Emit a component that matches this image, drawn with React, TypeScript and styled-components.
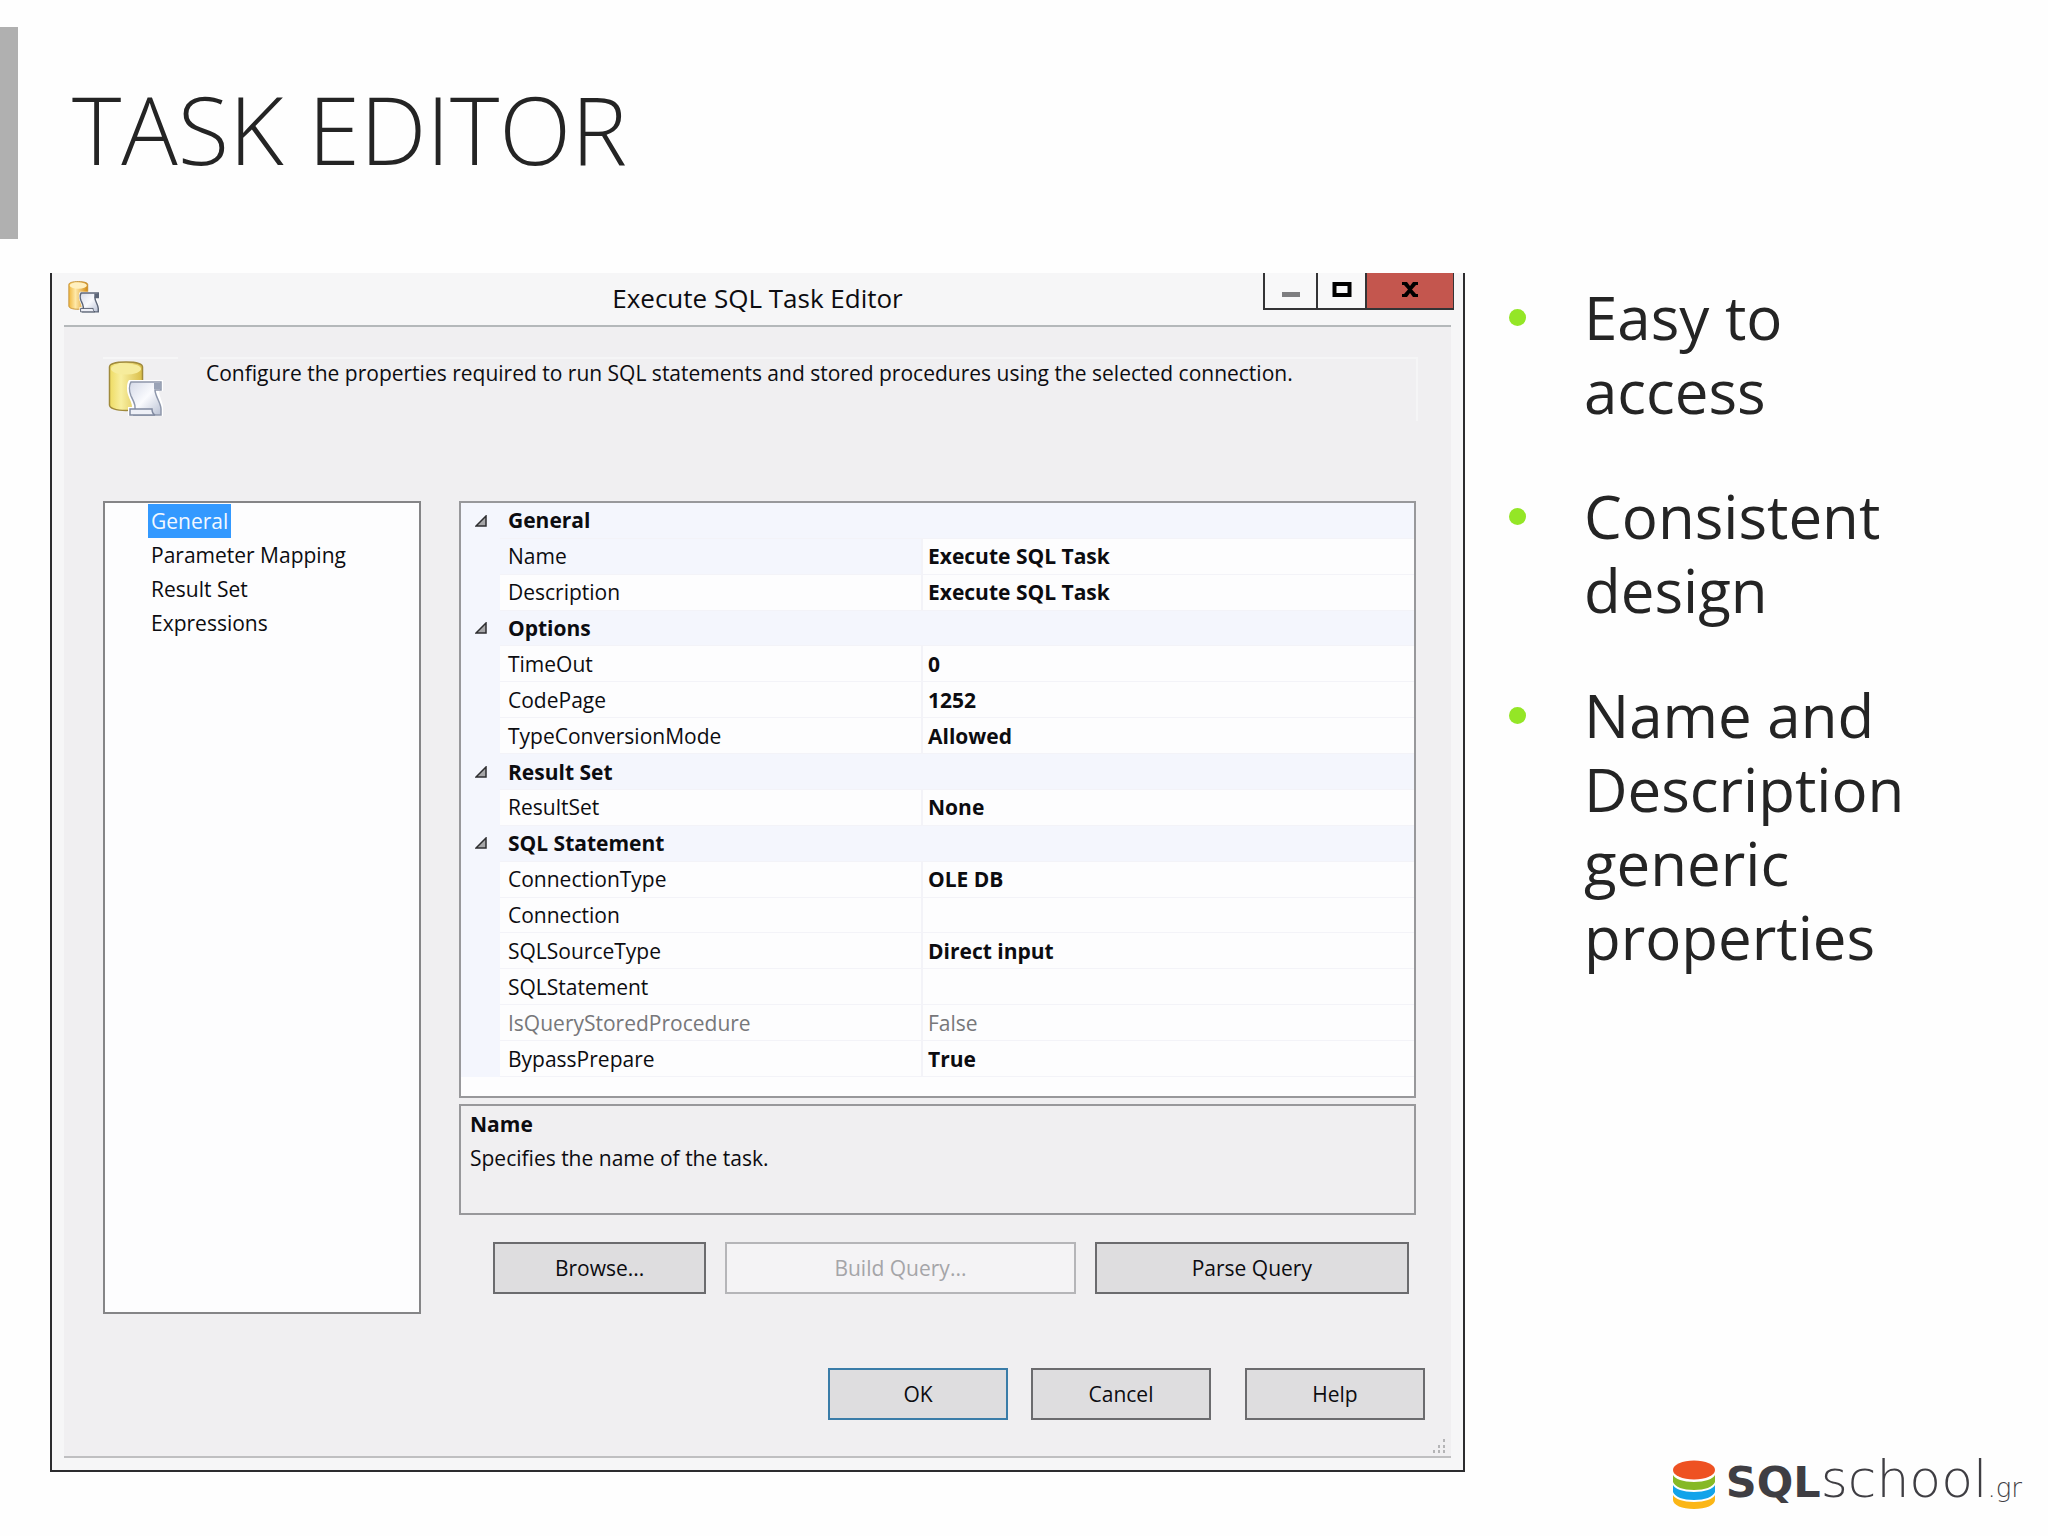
import React from "react";
import styled, { createGlobalStyle, css } from "styled-components";

const GlobalStyle = createGlobalStyle`
  *, *::before, *::after { box-sizing: border-box; }
  body { margin: 0; background: #fefefe; }
  body, button { font-family: "Open Sans", "Noto Sans", sans-serif; }
`;

const Slide = styled.main`
  display: flex;
  flex-direction: column;
  min-height: 100vh;
  padding-top: 27px;
  color: #242424;
`;

const Heading = styled.header`
  display: flex;
  align-items: flex-start;
  height: 212px;
  margin-bottom: 34px;
  padding: 34px 0 0 54px;
  border-left: 18px solid #b0b0b0;
`;

const Title = styled.h1`
  margin: 0;
  font-size: 94px;
  font-weight: 300;
  line-height: 136px;
`;

const Content = styled.div`
  display: flex;
  flex: 1;
  padding-left: 50px;
`;

const Dialog = styled.section`
  flex: 1;
  align-self: flex-start;
  min-width: 0;
  padding: 0 12px 12px;
  border: 2px solid #2c2c2e;
  border-top: 0;
  background: #f6f6f7;
  color: #0c0c10;
  font-size: 21px;
  line-height: 34px;
`;

const TitleBar = styled.div`
  position: relative;
  display: flex;
  align-items: flex-start;
  justify-content: center;
  height: 52px;
  padding-top: 8px;
`;

const TitleIcon = styled.div`
  position: absolute;
  left: 4px;
  top: 8px;
  display: flex;
`;

const DialogTitle = styled.h2`
  margin: 0;
  font-size: 26px;
  font-weight: 400;
  line-height: 34px;
`;

const WindowControls = styled.div`
  position: absolute;
  right: -3px;
  top: 0;
  display: flex;
  border: 2px solid #343436;
  border-width: 0 1px 2px 2px;
`;

const WindowButton = styled.button<{ $wide?: boolean; $close?: boolean }>`
  display: flex;
  justify-content: center;
  align-items: flex-start;
  width: ${(p) => (p.$close ? 86 : p.$wide ? 53 : 49)}px;
  height: 35px;
  padding: 9px 0 0;
  border: 0;
  border-right: ${(p) => (p.$close ? 0 : 2)}px solid #343436;
  background: ${(p) => (p.$close ? "#c4564e" : "#f8f8f9")};
`;

const Body = styled.div`
  padding: 30px 26px 36px 39px;
  border-top: 2px solid #b4b8ba;
  border-bottom: 2px solid #bfbfc1;
  background: #f0eff1;
`;

const Intro = styled.div`
  display: flex;
  gap: 22px;
  height: 144px;
  padding-right: 7px;
`;

const IntroIcon = styled.div`
  width: 75px;
  height: 64px;
  padding: 2px 5px;
  border-top: 2px solid #f6f6f7;
`;

const IntroText = styled.p`
  flex: 1;
  height: 64px;
  margin: 0;
  padding-left: 6px;
  border: 2px solid #f5f5f6;
  border-width: 2px 2px 0 0;
  line-height: 28px;
`;

const Columns = styled.div`
  display: flex;
  gap: 38px;
  padding-right: 9px;
`;

const Pages = styled.ul`
  width: 318px;
  margin: 0;
  padding: 1px 0 0 43px;
  border: 2px solid #858587;
  background: #fdfdfe;
  list-style: none;
`;

const PageItem = styled.li`
  height: 34px;
`;

const PageButton = styled.button<{ $selected?: boolean }>`
  display: block;
  height: 34px;
  padding: 0 3px;
  border: 0;
  background: ${(p) => (p.$selected ? "#3399ff" : "transparent")};
  color: ${(p) => (p.$selected ? "#f2f8ff" : "#0c0c10")};
  font-size: 21px;
  line-height: 32px;
`;

const Details = styled.div`
  display: flex;
  flex: 1;
  flex-direction: column;
  min-width: 0;
  padding-bottom: 20px;
`;

const GridFrame = styled.div`
  margin-bottom: 6px;
  padding-bottom: 19px;
  border: 2px solid #98989b;
  background: #fdfdfe;
`;

const PropertyTable = styled.table`
  width: 100%;
  height: 574px;
  border-collapse: collapse;
  table-layout: fixed;
  line-height: 30px;
  text-align: left;
`;

const GutterCol = styled.col`
  width: 39px;
`;

const LabelCol = styled.col`
  width: 422px;
`;

const Gutter = styled.td`
  padding: 0;
  background: #f4f6fd;
`;

const Toggle = styled.button`
  display: flex;
  padding: 0 0 0 14px;
  border: 0;
  background: transparent;
`;

const GroupName = styled.th`
  padding: 0 0 0 8px;
  background: #f4f6fd;
  font-weight: 700;
`;

const mutedText = css`
  color: #77777a;
  font-weight: 400;
`;

const Label = styled.th<{ $active?: boolean; $muted?: boolean }>`
  padding: 0 0 0 8px;
  border: 1px solid #f3f3f8;
  border-width: 1px 2px 1px 0;
  background: ${(p) => (p.$active ? "#f4f6fd" : "#fdfdfe")};
  font-weight: 400;
  ${(p) => p.$muted && mutedText}
`;

const Value = styled.td<{ $muted?: boolean }>`
  padding: 0 0 0 5px;
  border: 1px solid #f3f3f8;
  border-width: 1px 0;
  font-weight: 700;
  ${(p) => p.$muted && mutedText}
`;

const HelpBox = styled.div`
  height: 111px;
  margin-bottom: 27px;
  padding: 1px 9px;
  border: 2px solid #98989b;
`;

const HelpLine = styled.p<{ $bold?: boolean }>`
  margin: 0;
  font-weight: ${(p) => (p.$bold ? 700 : 400)};
`;

const QueryButtons = styled.div`
  display: grid;
  grid-template-columns: 213fr 350fr 314fr;
  gap: 19px;
  padding: 0 7px 0 34px;
`;

const DialogButtons = styled.div`
  display: flex;
  justify-content: flex-end;
  gap: 23px;
  margin-top: 54px;
`;

const Button = styled.button<{ $primary?: boolean; $apart?: boolean }>`
  min-width: 180px;
  height: 52px;
  padding: 0;
  margin-left: ${(p) => (p.$apart ? 11 : 0)}px;
  border: 2px solid ${(p) => (p.$primary ? "#3a7ca8" : "#6b6b6e")};
  background: #dedddf;
  color: #0c0c10;
  font-size: 21px;
  line-height: 34px;

  &:disabled {
    border-color: #b5b5b8;
    background: #f4f3f5;
    color: #a5a5a8;
  }
`;

const Grip = styled.div`
  position: absolute;
  right: 4px;
  bottom: 4px;
  display: flex;
`;

const BodyWrap = styled.div`
  position: relative;
`;

const Aside = styled.aside`
  display: flex;
  flex-direction: column;
  justify-content: space-between;
  width: 583px;
  padding: 7px 26px 26px 44px;
`;

const Points = styled.ul`
  margin: 0;
  padding: 0 104px 0 0;
  list-style: none;
`;

const Point = styled.li`
  display: flex;
  gap: 58px;
  margin-bottom: 51px;
  font-size: 60px;
  line-height: 74px;
`;

const Dot = styled.span`
  flex: none;
  width: 17px;
  height: 17px;
  margin-top: 29px;
  border-radius: 50%;
  background: #94e626;
`;

const Brand = styled.div`
  display: flex;
  align-self: flex-end;
  align-items: flex-end;
`;

const BrandText = styled.div`
  display: flex;
  align-items: baseline;
  margin-left: 10px;
  color: #3f3e43;
  font-family: "DejaVu Sans", sans-serif;
  font-size: 52px;
  font-weight: 200;
  line-height: 44px;
`;

const BrandStrong = styled.span`
  font-size: 43px;
  font-weight: 700;
`;

const BrandSuffix = styled.span`
  font-size: 26px;
`;

function TaskIcon({ size, warm }: { size: number; warm?: boolean }) {
  const id = warm ? "small" : "large";
  return (
    <svg width={size} height={size} viewBox="0 0 56 56" aria-hidden="true">
      <defs>
        <linearGradient id={`${id}-can`} x1="0" x2="1">
          <stop offset="0" stopColor={warm ? "#f0b840" : "#eedb62"} />
          <stop offset=".35" stopColor={warm ? "#ffe9a8" : "#f8efa0"} />
          <stop offset="1" stopColor={warm ? "#d38a12" : "#d9bd48"} />
        </linearGradient>
        <linearGradient id={`${id}-sheet`} x1="0" x2="1" y2="1">
          <stop offset="0" stopColor="#d5dae8" />
          <stop offset=".5" stopColor="#fafbfe" />
          <stop offset="1" stopColor="#b9c1d4" />
        </linearGradient>
      </defs>
      <path
        d="M1.500 6C1.500 3 8 1 18 1s16.500 2 16.500 5v38c0 3-6 5.500-16.500 5.500S1.500 47 1.500 44z"
        fill={`url(#${id}-can)`}
        stroke={warm ? "#c08a2c" : "#a08a3c"}
        strokeWidth="1.500"
      />
      <ellipse cx="18" cy="8" rx="15" ry="5.500" fill={warm ? "#fff0c0" : "#f6ec9c"} />
      <path
        d="M21 19h34v11h-4c0 5 4 11 4 17v8H20v-9h4c0-6-5-11-5-18 0-4 0-6 2-9z"
        fill="#fff"
      />
      <path
        d="M23 21h30v8h-6c0 6 6 13 6 19v6H26c3-8 0-13-3-19-2-5-2-11 0-14z"
        fill={`url(#${id}-sheet)`}
        stroke={warm ? "#5d6678" : "#8e97ab"}
        strokeWidth={warm ? 2.5 : 1.5}
      />
      <path d="M46 22h7v6h-7z" fill={warm ? "#5d6678" : "#9aa3b6"} />
      <path d="M22 48h22c0 3 1 5 3 6H22z" fill="#eef0f7" stroke={warm ? "#4a5263" : "#8089a0"} strokeWidth="1.500" />
    </svg>
  );
}

function ArrowIcon() {
  return (
    <svg width="12" height="12" viewBox="0 0 12 12" aria-hidden="true">
      <path d="M11 1v10H1z" fill="#a6a6a8" stroke="#2e2e30" strokeWidth="1.500" />
    </svg>
  );
}

type Row = { label: string; value: string; muted?: boolean; active?: boolean };

const groups: { name: string; rows: Row[] }[] = [
  {
    name: "General",
    rows: [
      { label: "Name", value: "Execute SQL Task", active: true },
      { label: "Description", value: "Execute SQL Task" },
    ],
  },
  {
    name: "Options",
    rows: [
      { label: "TimeOut", value: "0" },
      { label: "CodePage", value: "1252" },
      { label: "TypeConversionMode", value: "Allowed" },
    ],
  },
  { name: "Result Set", rows: [{ label: "ResultSet", value: "None" }] },
  {
    name: "SQL Statement",
    rows: [
      { label: "ConnectionType", value: "OLE DB" },
      { label: "Connection", value: "" },
      { label: "SQLSourceType", value: "Direct input" },
      { label: "SQLStatement", value: "" },
      { label: "IsQueryStoredProcedure", value: "False", muted: true },
      { label: "BypassPrepare", value: "True" },
    ],
  },
];

const pages = ["General", "Parameter Mapping", "Result Set", "Expressions"];
const points = ["Easy to access", "Consistent design", "Name and Description generic properties"];

function PropertyGrid() {
  return (
    <GridFrame>
      <PropertyTable>
        <colgroup>
          <GutterCol />
          <LabelCol />
          <col />
        </colgroup>
        {groups.map((group) => (
          <tbody key={group.name}>
            <tr>
              <Gutter>
                <Toggle type="button" aria-label={`Collapse ${group.name}`} aria-expanded="true">
                  <ArrowIcon />
                </Toggle>
              </Gutter>
              <GroupName colSpan={2} scope="rowgroup">{group.name}</GroupName>
            </tr>
            {group.rows.map((row) => (
              <tr key={row.label}>
                <Gutter />
                <Label scope="row" $active={row.active} $muted={row.muted}>{row.label}</Label>
                <Value $muted={row.muted}>{row.value}</Value>
              </tr>
            ))}
          </tbody>
        ))}
      </PropertyTable>
    </GridFrame>
  );
}

function TaskEditor() {
  return (
    <Dialog role="dialog" aria-labelledby="dialog-title">
      <TitleBar>
        <TitleIcon><TaskIcon size={32} warm /></TitleIcon>
        <DialogTitle id="dialog-title">Execute SQL Task Editor</DialogTitle>
        <WindowControls>
          <WindowButton type="button" $wide aria-label="Minimize">
            <svg width="20" height="16" aria-hidden="true">
              <path d="M1 10h18v5H1z" fill="#7e7e80" />
            </svg>
          </WindowButton>
          <WindowButton type="button" aria-label="Maximize">
            <svg width="20" height="16" aria-hidden="true">
              <path d="M2.500 2h15v11h-15z" fill="#f8f8f9" stroke="#000" strokeWidth="4" />
            </svg>
          </WindowButton>
          <WindowButton type="button" $close aria-label="Close">
            <svg width="18" height="16" aria-hidden="true">
              <path
                d="M1 0h5l3 4 3-4h5v3h-2l-4 4.500 4 4.500h2v3h-5l-3-4-3 4H1v-3h2l4-4.500L3 3H1z"
                fill="#000"
              />
            </svg>
          </WindowButton>
        </WindowControls>
      </TitleBar>
      <BodyWrap>
        <Body>
          <Intro>
            <IntroIcon><TaskIcon size={56} /></IntroIcon>
            <IntroText>
              Configure the properties required to run SQL statements and stored procedures using the selected connection.
            </IntroText>
          </Intro>
          <Columns>
            <Pages>
              {pages.map((page, i) => (
                <PageItem key={page}>
                  <PageButton type="button" $selected={i === 0}>{page}</PageButton>
                </PageItem>
              ))}
            </Pages>
            <Details>
              <PropertyGrid />
              <HelpBox>
                <HelpLine $bold>Name</HelpLine>
                <HelpLine>Specifies the name of the task.</HelpLine>
              </HelpBox>
              <QueryButtons>
                <Button type="button">Browse...</Button>
                <Button type="button" disabled>Build Query...</Button>
                <Button type="button">Parse Query</Button>
              </QueryButtons>
            </Details>
          </Columns>
          <DialogButtons>
            <Button type="button" $primary>OK</Button>
            <Button type="button">Cancel</Button>
            <Button type="button" $apart>Help</Button>
          </DialogButtons>
        </Body>
        <Grip>
          <svg width="16" height="16" aria-hidden="true">
            <path
              d="M12 1h2v3h-2zM12 7h2v3h-2zM7 7h2v3H7zM12 12h2v3h-2zM7 12h2v3H7zM2 12h2v3H2z"
              fill="#b4b4b6"
            />
          </svg>
        </Grip>
      </BodyWrap>
    </Dialog>
  );
}

function Logo() {
  return (
    <Brand>
      <svg width="44" height="50" viewBox="0 0 44 50" aria-hidden="true">
        <path d="M1 35v5c0 5 9 9 21 9s21-4 21-9v-5c-2 4-10 7-21 7S3 39 1 35z" fill="#fbb616" />
        <path d="M1 25v7c2 5 10 8 21 8s19-3 21-8v-7c-2 4-10 7-21 7S3 29 1 25z" fill="#12a3ea" />
        <path d="M1 15v7c2 5 10 8 21 8s19-3 21-8v-7c-2 4-10 7-21 7S3 19 1 15z" fill="#86b926" />
        <ellipse cx="22" cy="10" rx="21" ry="9.500" fill="#ee5122" />
      </svg>
      <BrandText>
        <BrandStrong>SQL</BrandStrong>
        <span>school</span>
        <BrandSuffix>.gr</BrandSuffix>
      </BrandText>
    </Brand>
  );
}

export default function App() {
  return (
    <>
      <GlobalStyle />
      <Slide>
        <Heading>
          <Title>TASK EDITOR</Title>
        </Heading>
        <Content>
          <TaskEditor />
          <Aside>
            <Points>
              {points.map((point) => (
                <Point key={point}>
                  <Dot />
                  <span>{point}</span>
                </Point>
              ))}
            </Points>
            <Logo />
          </Aside>
        </Content>
      </Slide>
    </>
  );
}
